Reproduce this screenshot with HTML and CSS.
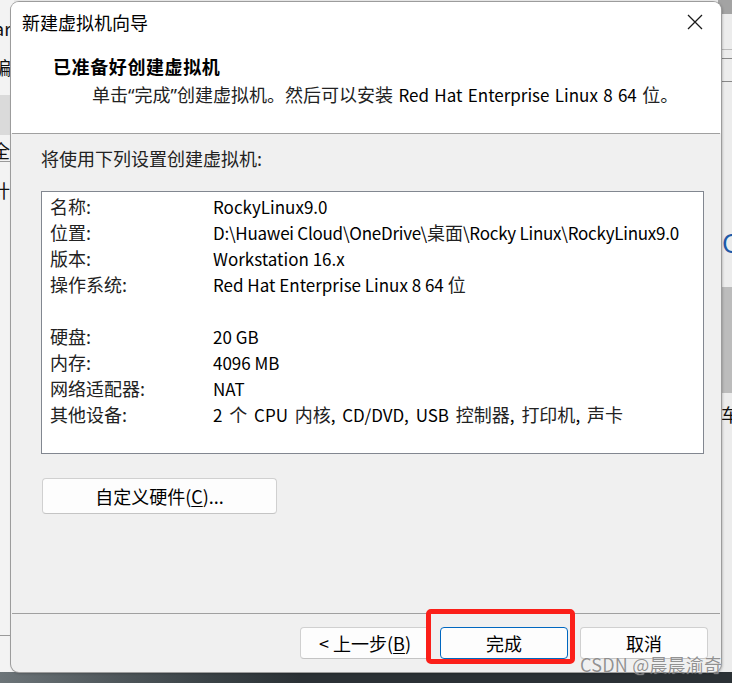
FILE: index.html
```html
<!DOCTYPE html>
<html lang="zh-CN">
<head>
<meta charset="utf-8">
<title>新建虚拟机向导</title>
<link rel="stylesheet" href="styles.css">
</head>
<body>
<div class="desktop">
  <div class="bg-left">
    <div class="bg-left-band"></div>
    <div class="bg-left-line l1"></div>
    <div class="bg-left-line l2"></div>
    <span class="frag f1">ar</span>
    <span class="frag f2">编</span>
    <span class="frag f3">全</span>
    <span class="frag f4">计</span>
  </div>
  <div class="bg-right">
    <div class="bg-right-top"></div>
    <div class="bg-right-line r1"></div>
    <div class="bg-right-line r2"></div>
    <div class="bg-right-line r3"></div>
    <div class="bg-right-band"></div>
    <span class="frag g1">C</span>
    <span class="frag g2">车</span>
  </div>
  <div class="taskbar"><div class="taskbar-glow"></div></div>

  <div class="dialog">
    <div class="top">
      <div class="titlebar">
        <span class="title">新建虚拟机向导</span>
        <svg class="close" width="16" height="16" viewBox="0 0 16 16"><path d="M1 1 L15 15 M15 1 L1 15" stroke="#1a1a1a" stroke-width="1.3" fill="none"/></svg>
      </div>
      <div class="header">
        <div class="h-title">已准备好创建虚拟机</div>
        <div class="h-sub">单击<span class="q">“</span>完成<span class="q">”</span>创建虚拟机。然后可以安装 <span class="lat">Red Hat Enterprise Linux 8 64</span> 位。</div>
      </div>
    </div>
    <div class="sep"></div>
    <div class="body">
      <div class="intro">将使用下列设置创建虚拟机:</div>
      <div class="summary">
        <div class="row"><span class="k">名称:</span><span class="v">RockyLinux9.0</span></div>
        <div class="row"><span class="k">位置:</span><span class="v path">D:\Huawei Cloud\OneDrive\<span class="c">桌面</span>\Rocky Linux\RockyLinux9.0</span></div>
        <div class="row"><span class="k">版本:</span><span class="v">Workstation 16.x</span></div>
        <div class="row"><span class="k">操作系统:</span><span class="v">Red Hat Enterprise Linux 8 64 <span class="c">位</span></span></div>
        <div class="row"></div>
        <div class="row"><span class="k">硬盘:</span><span class="v">20 GB</span></div>
        <div class="row"><span class="k">内存:</span><span class="v">4096 MB</span></div>
        <div class="row"><span class="k">网络适配器:</span><span class="v">NAT</span></div>
        <div class="row"><span class="k">其他设备:</span><span class="v wide">2 <span class="c">个</span> CPU <span class="c">内核</span>, CD/DVD, USB <span class="c">控制器</span>, <span class="c">打印机</span>, <span class="c">声卡</span></span></div>
      </div>
      <button class="btn custom">自定义硬件(<u>C</u>)...</button>
    </div>
    <div class="sep"></div>
    <div class="footer">
      <button class="btn back">&lt;&nbsp;上一步(<u>B</u>)</button>
      <button class="btn finish">完成</button>
      <button class="btn cancel">取消</button>
    </div>
  </div>

  <div class="highlight"></div>
  <div class="watermark">CSDN @晨晨渝奇</div>
</div>
</body>
</html>
```

FILE: styles.css
```css
* { box-sizing: border-box; }
html, body { margin: 0; padding: 0; }
body {
  width: 732px;
  height: 683px;
  overflow: hidden;
  font-family: "Noto Sans CJK SC", sans-serif;
  color: #000;
}
.desktop {
  position: relative;
  width: 732px;
  height: 683px;
  background: #e9e9e9;
  overflow: hidden;
}

/* background windows */
.bg-left {
  position: absolute;
  left: 0; top: 0;
  width: 14px; height: 672px;
  background: #f3f3f3;
  overflow: hidden;
}
.bg-left-band {
  position: absolute; left: 0; top: 95px; width: 14px; height: 40px;
  background: #dadada;
}
.bg-left-line { position: absolute; left: 0; width: 14px; height: 1px; background: #9a9a9a; }
.bg-left-line.l1 { top: 161px; }
.bg-left-line.l2 { top: 635px; }
.frag {
  position: absolute;
  font-size: 18px;
  line-height: 20px;
  color: #111;
  white-space: nowrap;
}
.f1 { left: -6px; top: 18px; }
.f2 { left: -7px; top: 57px; }
.f3 { left: -8px; top: 140px; }
.f4 { left: -8px; top: 180px; }

.bg-right {
  position: absolute;
  left: 718px; top: 0;
  width: 14px; height: 672px;
  background: #ececec;
  overflow: hidden;
}
.bg-right-top { position: absolute; left: 0; top: 0; width: 14px; height: 14px; background: #a3a3a3; }
.bg-right-line { position: absolute; left: 0; width: 14px; height: 1px; background: #888; }
.bg-right-line.r1 { top: 49px; background: #bbb; }
.bg-right-line.r2 { top: 58px; }
.bg-right-line.r3 { top: 81px; }
.bg-right-band {
  position: absolute; left: 0; top: 287px; width: 14px; height: 106px;
  background: #bcbcbc;
}
.g1 { left: 4px; top: 228px; color: #1f5aa8; font-size: 26px; line-height: 28px; }
.g2 { left: 3px; top: 404px; }

.taskbar {
  position: absolute;
  left: 0; top: 672px;
  width: 732px; height: 11px;
  background: #2b3135;
}
.taskbar-glow {
  position: absolute; left: 0; top: 0; width: 300px; height: 11px;
  background: linear-gradient(90deg, #6c7478 0%, #4e565a 40%, #3a4246 70%, #2b3135 100%);
}

/* dialog window */
.dialog {
  position: absolute;
  left: 11px; top: 2px;
  width: 710px; height: 670px;
  background: #f0f0f0;
  border-radius: 8px;
  box-shadow: 0 0 0 1px #9c9c9c, 1px 1px 3px rgba(0,0,0,0.35);
  display: flex;
  flex-direction: column;
  overflow: hidden;
}
.top { background: #fff; height: 131px; }
.titlebar {
  height: 42px;
  display: flex;
  align-items: center;
  justify-content: space-between;
  padding: 0 18px 2px 11px;
}
.title { font-size: 18px; line-height: 22px; }
.close { display: block; }
.header { padding-left: 42px; }
.h-title {
  font-size: 18px;
  font-weight: bold;
  letter-spacing: 0.6px;
  line-height: 22px;
  margin-top: 11px;
}
.h-sub {
  font-size: 18px;
  line-height: 22px;
  margin-top: 6px;
  padding-left: 39px;
  color: #222;
  word-spacing: 1.5px;
}
.lat { font-size: 17px; color: #000; }
.q { font-family: "Noto Sans", sans-serif; }
.sep { height: 1px; background: #a0a0a0; flex: none; margin: 0 1px; }

.body {
  flex: 1;
  padding: 14px 17px 0 30px;
}
.intro { font-size: 18px; line-height: 20px; color: #222; }
.summary {
  margin-top: 23px;
  height: 263px;
  background: #fff;
  border: 1px solid #828790;
  padding: 1px 0 0 8px;
}
.row {
  height: 26px;
  display: flex;
  align-items: center;
  white-space: nowrap;
}
.k { width: 163px; flex: none; font-size: 18px; color: #222; }
.v { flex: none; font-size: 17px; }
.v .c { font-size: 18px; color: #222; }
.path { letter-spacing: -0.25px; }
.path .c { letter-spacing: 0; }
.wide { word-spacing: 3px; }

.btn {
  font-family: "Noto Sans CJK SC", sans-serif;
  font-size: 18px;
  color: #000;
  background: #fdfdfd;
  border: 1px solid #d0d0d0;
  border-bottom-color: #c4c4c4;
  border-radius: 4px;
  padding: 0;
  line-height: 20px;
}
.btn u { text-underline-offset: 2px; }
.custom {
  display: block;
  margin-top: 24px;
  margin-left: 1px;
  width: 235px;
  height: 36px;
}
.footer {
  height: 58px;
  flex: none;
  display: flex;
  align-items: flex-start;
  padding: 13px 13px 0 0;
  justify-content: flex-end;
}
.footer .btn { height: 32px; }
.back { width: 130px; margin-right: 10px; }
.finish { width: 128px; margin-right: 12px; border: 1px solid #0067c0; }
.cancel { width: 128px; }

/* annotation overlay */
.highlight {
  position: absolute;
  left: 426px; top: 609px;
  width: 149px; height: 55px;
  border: 5px solid #fb1f19;
  border-radius: 5px;
}
.watermark {
  position: absolute;
  left: 580px; top: 652px;
  font-size: 18px;
  line-height: 24px;
  color: rgba(110,110,110,0.75);
  white-space: nowrap;
  text-shadow: 0 0 1px rgba(255,255,255,0.8);
  letter-spacing: 0.2px;
}
```
